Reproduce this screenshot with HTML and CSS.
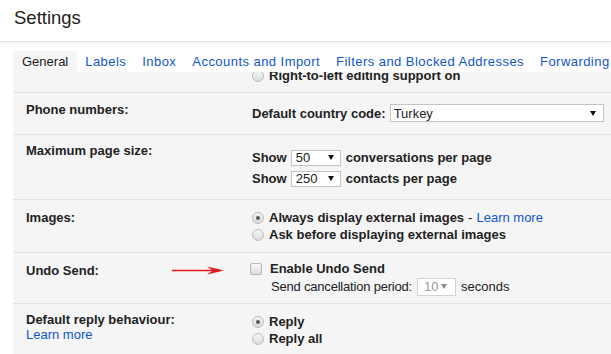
FILE: index.html
```html
<!DOCTYPE html>
<html lang="en">
<head>
    <meta charset="UTF-8">
    <title>Settings</title>
    <link rel="stylesheet" href="styles.css">
</head>
<body>
    <header class="top">
        <h1>Settings</h1>
    </header>

    <nav class="tabs">
        <a class="tab active">General</a>
        <a class="tab">Labels</a>
        <a class="tab">Inbox</a>
        <a class="tab">Accounts and Import</a>
        <a class="tab">Filters and Blocked Addresses</a>
        <a class="tab">Forwarding</a>
    </nav>

    <div class="panel">
        <!-- scrolled up under the tab bar -->
        <div class="row row-rtl">
            <div class="label"></div>
            <div class="value">
                <div class="line"><span class="radio"></span><b>Right-to-left editing support on</b></div>
            </div>
        </div>

        <div class="row row-phone">
            <div class="label">Phone numbers:</div>
            <div class="value">
                <div class="line tall">
                    <b>Default country code:</b>
                    <span class="select select-country">Turkey</span>
                </div>
            </div>
        </div>

        <div class="row row-page">
            <div class="label">Maximum page size:</div>
            <div class="value">
                <div class="line show">
                    <b>Show</b>
                    <span class="select select-small">50</span>
                    <b>conversations per page</b>
                </div>
                <div class="line show">
                    <b>Show</b>
                    <span class="select select-small">250</span>
                    <b>contacts per page</b>
                </div>
            </div>
        </div>

        <div class="row row-images">
            <div class="label">Images:</div>
            <div class="value">
                <div class="line"><span class="radio on"></span><b>Always display external images</b><span class="dash">-</span><a class="link">Learn more</a></div>
                <div class="line"><span class="radio"></span><b>Ask before displaying external images</b></div>
            </div>
        </div>

        <div class="row row-undo">
            <div class="label">Undo Send:</div>
            <div class="value">
                <div class="line"><span class="checkbox"></span><b>Enable Undo Send</b></div>
                <div class="line sub">
                    <span class="sub-text">Send cancellation period:</span>
                    <span class="select select-disabled">10</span>
                    seconds
                </div>
            </div>
            <svg class="arrow" width="56" height="13" viewBox="0 0 56 13">
                <line x1="1" y1="6.5" x2="43" y2="6.5" stroke="#e3161d" stroke-width="1.6"/>
                <polygon points="36,2.5 53,6.5 36,10.5 42,6.5" fill="#e3161d"/>
            </svg>
        </div>

        <div class="row row-reply">
            <div class="label">
                Default reply behaviour:
                <a class="link label-link">Learn more</a>
            </div>
            <div class="value">
                <div class="line"><span class="radio on"></span><b>Reply</b></div>
                <div class="line"><span class="radio"></span><b>Reply all</b></div>
            </div>
        </div>
    </div>
</body>
</html>
```

FILE: styles.css
```css
* {
    box-sizing: border-box;
}
body {
    margin: 0;
    font-family: "Liberation Sans", Arial, sans-serif;
    font-size: 13px;
    color: #222;
    background: #fff;
}
.top {
    height: 42px;
    border-bottom: 1px solid #e3e3e3;
    box-shadow: 0 1px 2px rgba(0, 0, 0, 0.06);
}
h1 {
    margin: 0;
    padding: 7px 0 0 14px;
    font-size: 18.5px;
    font-weight: normal;
    line-height: 22px;
    color: #222;
}
.tabs {
    display: flex;
    margin-top: 9px;
    padding-left: 13px;
    height: 21px;
    white-space: nowrap;
}
.tab {
    padding: 0 8px;
    line-height: 21px;
    letter-spacing: 0.45px;
    color: #15c;
}
.tab.active {
    background: #f5f5f5;
    color: #222;
    letter-spacing: 0;
    padding: 0 9px;
}
.panel {
    margin-left: 13px;
    background: #f5f5f5;
    overflow: hidden;
    padding-bottom: 20px;
}
.row {
    display: grid;
    grid-template-columns: 226px 1fr;
    padding-left: 13px;
    border-top: 1px solid #e2e2e2;
    position: relative;
}
.label {
    font-weight: bold;
    line-height: 16px;
}
.line {
    display: flex;
    align-items: center;
    height: 17px;
    white-space: nowrap;
}
.link {
    color: #15c;
    font-weight: normal;
}
.label-link {
    display: block;
}
.dash {
    margin: 0 4px;
}

/* per-row spacing */
.row-rtl {
    border-top: none;
    margin-top: -5px;
    padding-bottom: 8px;
}
.row-phone .label {
    padding-top: 9px;
}
.row-phone .value {
    padding: 11px 0 12px;
}
.line.tall {
    height: 18px;
}
.row-page .label {
    padding-top: 8px;
}
.row-page .value {
    padding: 12px 0 10px;
}
.line.show {
    height: 21px;
}
.row-images .label {
    padding-top: 10px;
}
.row-images .value {
    padding: 9px 0 9px;
}
.row-undo .label {
    padding-top: 10px;
}
.row-undo .value {
    padding: 7px 0 7px;
}
.line.sub {
    height: 19px;
    padding-left: 19px;
}
.sub-text {
    letter-spacing: -0.2px;
}
.row-reply .label {
    padding-top: 8px;
    line-height: 15px;
}
.row-reply .value {
    padding: 9px 0 9px;
}

/* controls */
.radio {
    flex: none;
    position: relative;
    width: 12px;
    height: 12px;
    margin-right: 5px;
    border-radius: 50%;
    border: 1px solid #bdbdbd;
    background: linear-gradient(#f6f6f6, #dadada);
}
.radio.on::after {
    content: '';
    position: absolute;
    left: 3px;
    top: 3px;
    width: 4px;
    height: 4px;
    border-radius: 50%;
    background: #555;
}
.checkbox {
    flex: none;
    width: 12px;
    height: 12px;
    margin: 0 8px 0 -2px;
    border-radius: 2px;
    border: 1px solid #b5b5b5;
    background: linear-gradient(#f8f8f8, #dedede);
}
.select {
    display: inline-flex;
    align-items: center;
    justify-content: space-between;
    background: #fff;
    border: 1px solid #c4c4c4;
    font-weight: normal;
    color: #222;
}
.select::after {
    content: '';
    border-left: 3.5px solid transparent;
    border-right: 3.5px solid transparent;
    border-top: 5px solid #111;
}
.select-country {
    width: 214px;
    height: 18px;
    margin-left: 4px;
    padding: 0 7px 0 3px;
}
.select-small {
    width: 50px;
    height: 16px;
    margin: 0 5px 0 4px;
    padding: 0 6px 0 4px;
}
.select-disabled {
    width: 39px;
    height: 18px;
    margin: 0 5px;
    padding: 0 8px 0 6px;
    color: #9a9a9a;
    border-color: #d2d2d2;
}
.select-disabled::after {
    border-top-color: #8a8a8a;
}
.arrow {
    position: absolute;
    left: 158px;
    top: 11px;
}
```
